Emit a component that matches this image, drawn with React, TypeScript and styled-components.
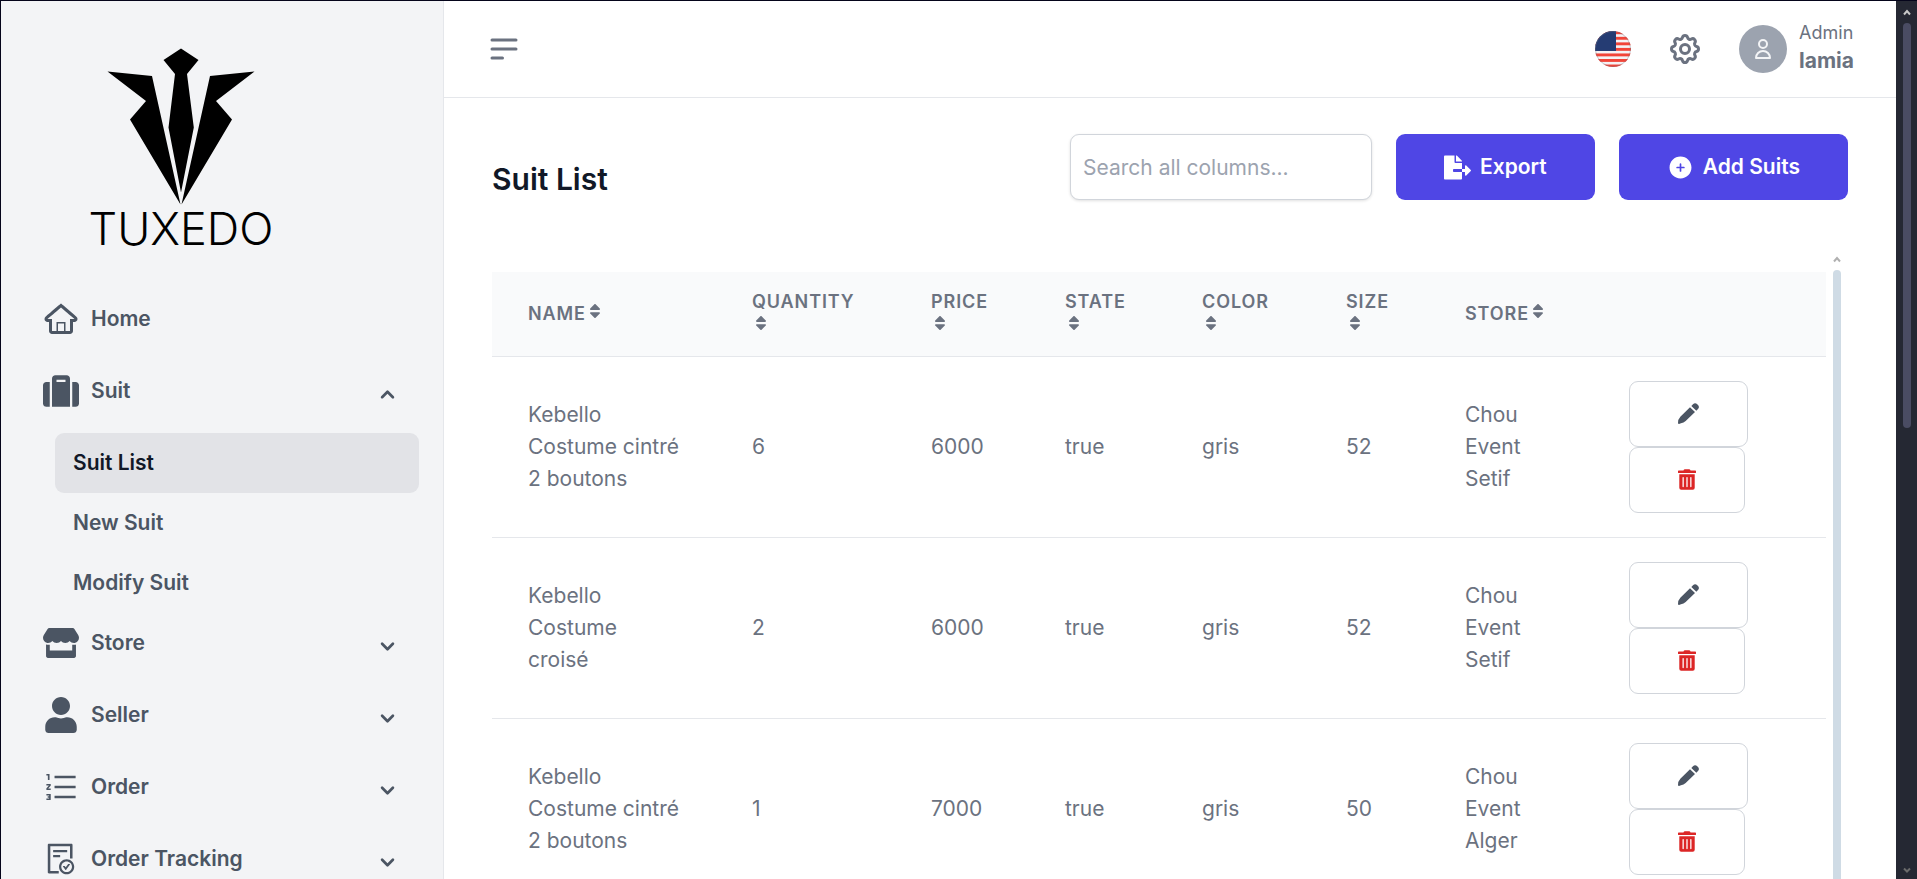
import React from "react";
import styled, { createGlobalStyle, css } from "styled-components";
import { AiOutlineFileDone, AiOutlineOrderedList } from "react-icons/ai";
import { FaFileExport, FaSort, FaStore, FaSuitcase, FaTrashAlt, FaUser } from "react-icons/fa";
import { HiChevronDown, HiChevronUp, HiOutlineCog, HiOutlineMenuAlt2, HiOutlineUser } from "react-icons/hi";
import { HiPlusCircle } from "react-icons/hi2";
import { TiHomeOutline } from "react-icons/ti";

const color = {
  frame: "#04041a",
  panel: "#f3f4f6",
  line: "#e5e7eb",
  control: "#d1d5db",
  active: "#e2e3e7",
  text: "#6b7280",
  nav: "#4b5563",
  ink: "#111827",
  muted: "#9ca3af",
  primary: "#4f46e5",
  danger: "#dc2626",
  head: "#f9fafb",
};

const GlobalStyle = createGlobalStyle`
  *, *::before, *::after { box-sizing: border-box; }
  body {
    margin: 0;
    background: #fff;
    color: ${color.text};
    font-family: Inter, "Liberation Sans", sans-serif;
    font-size: 21px;
    line-height: 32px;
  }
  button, input { font: inherit; }
  button { cursor: pointer; }
  a { color: inherit; text-decoration: none; }
`;

const Shell = styled.div`
  display: flex;
  height: 100vh;
  overflow: hidden;
  border-top: 1px solid ${color.frame};
  border-left: 1px solid ${color.frame};
`;

const Sidebar = styled.aside`
  flex: 0 0 443px;
  background: ${color.panel};
  border-right: 1px solid ${color.line};
  overflow: hidden;
`;

const Brand = styled.a`
  display: flex;
  flex-direction: column;
  align-items: center;
  width: 360px;
  height: 288px;
  padding-top: 47px;
  color: #000;
`;

const Wordmark = styled.span`
  font-size: 45px;
  font-weight: 300;
  line-height: 46px;
`;

const Nav = styled.nav`
  padding: 0 24px;
`;

const navRow = css`
  display: flex;
  align-items: center;
  height: 60px;
  padding: 0 18px;
  border-radius: 9px;
  font-weight: 600;
  color: ${color.nav};
`;

const NavLink = styled.a`
  ${navRow}
  gap: 12px;
  margin-bottom: 12px;
`;

const NavToggle = styled.button`
  ${navRow}
  gap: 12px;
  width: 100%;
  margin-bottom: 12px;
  border: 0;
  background: none;
  text-align: left;
`;

const NavLabel = styled.span`
  flex: 1;
`;

const Chevron = styled.span`
  display: flex;
  padding-top: 6px;
`;

const SubList = styled.div`
  padding-left: 30px;
`;

const SubLink = styled.a<{ $active?: boolean }>`
  ${navRow}
  ${(p) => p.$active && css`
    background: ${color.active};
    color: ${color.ink};
  `}
`;

const Page = styled.div`
  flex: 1;
  min-width: 0;
  display: flex;
  flex-direction: column;
`;

const TopBar = styled.header`
  display: flex;
  align-items: center;
  justify-content: space-between;
  flex: 0 0 97px;
  padding: 0 42px;
  border-bottom: 1px solid ${color.line};
`;

const TopActions = styled.div`
  display: flex;
  align-items: center;
  gap: 36px;
`;

const IconButton = styled.button`
  display: flex;
  padding: 0;
  border: 0;
  background: none;
  color: ${color.text};
`;

const Account = styled.button`
  display: flex;
  align-items: center;
  gap: 12px;
  padding: 0;
  border: 0;
  background: none;
  color: ${color.text};
  text-align: left;
`;

const Avatar = styled.span`
  display: flex;
  align-items: center;
  justify-content: center;
  width: 48px;
  height: 48px;
  border-radius: 50%;
  background: ${color.muted};
  color: #f3f4f6;
`;

const AccountText = styled.span`
  display: flex;
  flex-direction: column;
  padding-bottom: 4px;
`;

const Role = styled.span`
  font-size: 18px;
  line-height: 27px;
`;

const UserName = styled.span`
  font-weight: 700;
  line-height: 29px;
`;

const Content = styled.main`
  flex: 1;
  min-height: 0;
  display: flex;
  flex-direction: column;
  gap: 48px;
  padding: 36px 48px 0;
`;

const Toolbar = styled.div`
  display: flex;
  align-items: center;
  gap: 24px;
`;

const Title = styled.h3`
  flex: 1;
  margin: 0;
  padding-top: 24px;
  font-size: 30px;
  line-height: 42px;
  font-weight: 600;
  color: ${color.ink};
`;

const Search = styled.input`
  width: 302px;
  height: 66px;
  padding: 0 12px;
  border: 1px solid ${color.control};
  border-radius: 9px;
  background: #fff;
  box-shadow: 0 1px 3px rgba(0, 0, 0, 0.12);
  color: ${color.ink};
  &::placeholder { color: ${color.muted}; opacity: 1; }
`;

const PrimaryButton = styled.button`
  display: flex;
  align-items: center;
  gap: 9px;
  height: 66px;
  padding: 0 48px;
  border: 0;
  border-radius: 9px;
  background: ${color.primary};
  color: #fff;
  font-weight: 600;
`;

const ScrollArea = styled.div`
  flex: 1;
  min-height: 0;
  display: flex;
  overflow: hidden;
`;

const TableWrap = styled.div`
  flex: 1;
  min-width: 0;
  padding-top: 24px;
`;

const Table = styled.table`
  width: 100%;
  table-layout: fixed;
  border-collapse: separate;
  border-spacing: 0;
`;

const Column = styled.col<{ $width: number }>`
  width: ${(p) => p.$width}px;
`;

const HeadCell = styled.th`
  height: 85px;
  padding: 18px 36px;
  border-bottom: 1px solid ${color.line};
  background: ${color.head};
  font-size: 18px;
  line-height: 24px;
  font-weight: 600;
  letter-spacing: 0.05em;
  text-align: left;
  text-transform: uppercase;
`;

const SortMark = styled.span`
  display: inline-block;
`;

const Cell = styled.td`
  height: 181px;
  padding: 24px 36px;
  border-bottom: 1px solid ${color.line};
`;

const RowActions = styled.div`
  display: flex;
  flex-direction: column;
  align-items: flex-start;
`;

const RowButton = styled.button<{ $danger?: boolean }>`
  display: flex;
  align-items: center;
  height: 66px;
  padding: 0 48px 2px;
  border: 1px solid ${color.control};
  border-radius: 9px;
  background: #fff;
  color: ${(p) => (p.$danger ? color.danger : color.nav)};
`;

const TrashIcon = styled(FaTrashAlt)`
  width: 18px;
  height: 21px;
`;

const InnerRail = styled.div`
  flex: 0 0 22px;
  display: flex;
  flex-direction: column;
  align-items: center;
  gap: 7px;
  padding-top: 8px;
  color: #b0b0b0;
`;

const InnerThumb = styled.div`
  flex: 1;
  width: 8px;
  border-radius: 4px 4px 0 0;
  background: #cfdbe5;
`;

const OuterRail = styled.div`
  flex: 0 0 21px;
  display: flex;
  flex-direction: column;
  align-items: center;
  padding: 8px 0 5px;
  background: #252833;
  color: #c8c8c8;
`;

const OuterTrack = styled.div`
  flex: 1;
  padding-top: 7px;
`;

const OuterThumb = styled.div`
  width: 8px;
  height: 48%;
  border-radius: 4px;
  background: #4a4c63;
`;

const Arrow = ({ down, stroke = "currentColor" }: { down?: boolean; stroke?: string }) => (
  <svg width="8" height="7" viewBox="0 0 8 7" fill="none" stroke={stroke} strokeWidth="2" aria-hidden="true">
    <path d={down ? "M1 1.5l3 3 3-3" : "M1 5.5l3-3.5 3 3.5"} />
  </svg>
);

const PencilIcon = () => (
  <svg width="21" height="21" viewBox="0 0 63 63" fill="currentColor" aria-hidden="true">
    <path d="M40 9l5-5q6-6 13 0l1 1q7 6 1 13l-5 5z" />
    <path d="M36 13l15 14-28 27q-6 5-14 7l-6 2q-3 0-3-3 0-12 7-19z" />
  </svg>
);

const SuitMark = () => (
  <svg width="148" height="158" viewBox="107 48 148 158" aria-hidden="true">
    <path d="M181 48.5l17.5 11.5-11.5 14 6.8 53.5-12.8 65-12.500-65 6.500-53.500-11.500-14z" />
    <path d="M107.500 71.500l44.500 4.500L180.500 204.500 130 119.500l16-18.500z" />
    <path d="M254.500 71.500l-44.500 4.500L181.500 204.500 232 119.500l-16-18.500z" />
  </svg>
);

const Flag = () => (
  <svg width="36" height="36" viewBox="0 0 36 36" role="img" aria-label="English">
    <defs>
      <clipPath id="flag-round"><circle cx="18" cy="18" r="18" /></clipPath>
    </defs>
    <g clipPath="url(#flag-round)">
      <rect width="36" height="36" fill="#f4f2f4" />
      {[0, 1, 2, 3, 4, 5, 6].map((n) => (
        <rect key={n} y={n * 5.54 + 0.3} width="36" height="2.9" fill="#f24438" />
      ))}
      <rect width="21" height="20" fill="#253c73" />
      <circle cx="18" cy="18" r="17.500" fill="none" stroke="#6b7280" strokeOpacity="0.4" />
    </g>
  </svg>
);

const columns = [
  { label: "Name", width: 224 },
  { label: "Quantity", width: 179 },
  { label: "Price", width: 134 },
  { label: "State", width: 137 },
  { label: "Color", width: 144 },
  { label: "Size", width: 119 },
  { label: "Store", width: 164 },
];

const suits = [
  { name: "Kebello Costume cintré 2 boutons", quantity: 6, price: 6000, state: "true", color: "gris", size: 52, store: "Chou Event Setif" },
  { name: "Kebello Costume croisé", quantity: 2, price: 6000, state: "true", color: "gris", size: 52, store: "Chou Event Setif" },
  { name: "Kebello Costume cintré 2 boutons", quantity: 1, price: 7000, state: "true", color: "gris", size: 50, store: "Chou Event Alger" },
];

const groups = [
  { label: "Store", Icon: FaStore },
  { label: "Seller", Icon: FaUser },
  { label: "Order", Icon: AiOutlineOrderedList },
  { label: "Order Tracking", Icon: AiOutlineFileDone },
];

export default function App() {
  return (
    <>
      <GlobalStyle />
      <Shell>
        <Sidebar>
          <Brand href="#">
            <SuitMark />
            <Wordmark>TUXEDO</Wordmark>
          </Brand>
          <Nav>
            <NavLink href="#home">
              <TiHomeOutline size={36} />
              <NavLabel>Home</NavLabel>
            </NavLink>
            <NavToggle aria-expanded="true">
              <FaSuitcase size={36} />
              <NavLabel>Suit</NavLabel>
              <Chevron><HiChevronUp size={27} /></Chevron>
            </NavToggle>
            <SubList>
              <SubLink href="#suit-list" $active>Suit List</SubLink>
              <SubLink href="#new-suit">New Suit</SubLink>
              <SubLink href="#modify-suit">Modify Suit</SubLink>
            </SubList>
            {groups.map(({ label, Icon }) => (
              <NavToggle key={label} aria-expanded="false">
                <Icon size={36} />
                <NavLabel>{label}</NavLabel>
                <Chevron><HiChevronDown size={27} /></Chevron>
              </NavToggle>
            ))}
          </Nav>
        </Sidebar>
        <Page>
          <TopBar>
            <IconButton aria-label="Toggle menu"><HiOutlineMenuAlt2 size={36} /></IconButton>
            <TopActions>
              <IconButton aria-label="Language"><Flag /></IconButton>
              <IconButton aria-label="Settings"><HiOutlineCog size={36} /></IconButton>
              <Account>
                <Avatar><HiOutlineUser size={24} /></Avatar>
                <AccountText>
                  <Role>Admin</Role>
                  <UserName>lamia</UserName>
                </AccountText>
              </Account>
            </TopActions>
          </TopBar>
          <Content>
            <Toolbar>
              <Title>Suit List</Title>
              <Search type="text" aria-label="Search all columns" placeholder="Search all columns..." />
              <PrimaryButton><FaFileExport size={27} />Export</PrimaryButton>
              <PrimaryButton><HiPlusCircle size={27} />Add Suits</PrimaryButton>
            </Toolbar>
            <ScrollArea>
              <TableWrap>
                <Table>
                  <colgroup>
                    {columns.map((c) => <Column key={c.label} $width={c.width} />)}
                    <Column $width={233} />
                  </colgroup>
                  <thead>
                    <tr>
                      {columns.map((c) => (
                        <HeadCell key={c.label} scope="col">
                          {c.label}<SortMark><FaSort size={18} /></SortMark>
                        </HeadCell>
                      ))}
                      <HeadCell scope="col" aria-label="Actions" />
                    </tr>
                  </thead>
                  <tbody>
                    {suits.map((s, i) => (
                      <tr key={i}>
                        <Cell>{s.name}</Cell>
                        <Cell>{s.quantity}</Cell>
                        <Cell>{s.price}</Cell>
                        <Cell>{s.state}</Cell>
                        <Cell>{s.color}</Cell>
                        <Cell>{s.size}</Cell>
                        <Cell>{s.store}</Cell>
                        <Cell>
                          <RowActions>
                            <RowButton aria-label="Edit"><PencilIcon /></RowButton>
                            <RowButton aria-label="Delete" $danger><TrashIcon /></RowButton>
                          </RowActions>
                        </Cell>
                      </tr>
                    ))}
                  </tbody>
                </Table>
              </TableWrap>
              <InnerRail>
                <Arrow />
                <InnerThumb />
              </InnerRail>
            </ScrollArea>
          </Content>
        </Page>
        <OuterRail>
          <Arrow />
          <OuterTrack><OuterThumb /></OuterTrack>
          <Arrow down stroke="#6b6b6b" />
        </OuterRail>
      </Shell>
    </>
  );
}
